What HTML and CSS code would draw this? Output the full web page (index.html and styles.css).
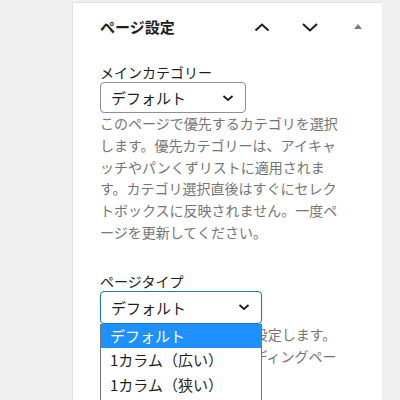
FILE: index.html
```html
<!DOCTYPE html>
<html lang="ja">
<head>
    <meta charset="UTF-8">
    <title>ページ設定</title>
    <link rel="stylesheet" href="styles.css">
</head>
<body>
    <div class="panel">
        <div class="panel-header">
            <h2 class="panel-title">ページ設定</h2>
            <button class="panel-btn" aria-label="上へ移動">
                <svg width="24" height="24" viewBox="0 0 24 24"><path d="M5.5 15.5l6.5-6 6.5 6" fill="none" stroke="#1e1e1e" stroke-width="2"/></svg>
            </button>
            <button class="panel-btn" aria-label="下へ移動">
                <svg width="24" height="24" viewBox="0 0 24 24"><path d="M5 9l7 6.5 7-6.5" fill="none" stroke="#1e1e1e" stroke-width="2"/></svg>
            </button>
            <button class="panel-btn" aria-label="パネルを閉じる">
                <svg width="24" height="24" viewBox="0 0 24 24"><path d="M8 14h8l-4-5z" fill="#787c82"/></svg>
            </button>
        </div>
        <div class="panel-body">
            <div class="field">
                <label class="field-label">メインカテゴリー</label>
                <div class="select select-small">
                    <span>デフォルト</span>
                    <svg width="16" height="16" viewBox="0 0 16 16"><path d="M3.5 6l4.5 4 4.5-4" fill="none" stroke="#1e1e1e" stroke-width="1.8"/></svg>
                </div>
                <p class="field-desc">このページで優先するカテゴリを選択します。優先カテゴリーは、アイキャッチやパンくずリストに適用されます。カテゴリ選択直後はすぐにセレクトボックスに反映されません。一度ページを更新してください。</p>
            </div>
            <div class="field">
                <label class="field-label">ページタイプ</label>
                <div class="select-wrap">
                    <div class="select select-focus">
                        <span>デフォルト</span>
                        <svg width="16" height="16" viewBox="0 0 16 16"><path d="M3.5 6l4.5 4 4.5-4" fill="none" stroke="#1e1e1e" stroke-width="1.8"/></svg>
                    </div>
                    <ul class="dropdown">
                        <li class="active">デフォルト</li>
                        <li>1カラム（広い）</li>
                        <li>1カラム（狭い）</li>
                    </ul>
                </div>
                <p class="field-desc">このページの表示形式を設定します。サイドバー無しや、ランディングページに最適です。</p>
            </div>
        </div>
    </div>
</body>
</html>
```

FILE: styles.css
```css
body {
    margin: 0;
    background-color: #f0f0f1;
    font-family: "Noto Sans CJK JP", "Noto Sans", sans-serif;
    color: #1e1e1e;
    overflow: hidden;
    height: 400px;
}

.panel {
    margin: 2px 0 0 72px;
    width: 309px;
    height: 398px;
    background: #fff;
    border-top: 1px solid #e0e0e0;
    border-left: 1px solid #e0e0e0;
}

.panel-header {
    display: flex;
    align-items: center;
    height: 48px;
    padding-left: 27px;
}

.panel-title {
    flex: 1;
    margin: 0;
    font-size: 15px;
    font-weight: 700;
    line-height: 20px;
}

.panel-btn {
    width: 48px;
    height: 48px;
    padding: 0;
    border: none;
    background: none;
    display: flex;
    align-items: center;
    justify-content: center;
}

.panel-body {
    padding: 11px 0 0 27px;
}

.field {
    margin-bottom: 27px;
}

.field-label {
    display: block;
    font-size: 14px;
    line-height: 20px;
}

.select-wrap {
    position: relative;
}

.select {
    box-sizing: border-box;
    display: flex;
    align-items: center;
    justify-content: space-between;
    width: 162px;
    height: 33px;
    padding: 0 9px 0 10px;
    border: 1px solid #8c8f94;
    border-radius: 4px;
    font-size: 15px;
    background: #fff;
}

.select-small {
    width: 146px;
    height: 31px;
}

.select-focus {
    border: 1.5px solid #2271b1;
    box-shadow: 0 2px 3px rgba(0, 0, 0, 0.12);
}

.field-desc {
    margin: 0;
    width: 248px;
    font-size: 14px;
    line-height: 21.8px;
    color: #757575;
}

.dropdown {
    position: absolute;
    top: 33px;
    left: 0;
    box-sizing: border-box;
    width: 162px;
    height: 80px;
    margin: 0;
    padding: 0;
    list-style: none;
    background: #fff;
    border: 1px solid #767676;
    border-top: none;
    font-size: 15px;
    z-index: 2;
}

.dropdown li {
    height: 24.5px;
    line-height: 24.5px;
    padding-left: 9px;
    color: #1e1e1e;
}

.dropdown li.active {
    background: #1e90ff;
    color: #fff;
}
```
